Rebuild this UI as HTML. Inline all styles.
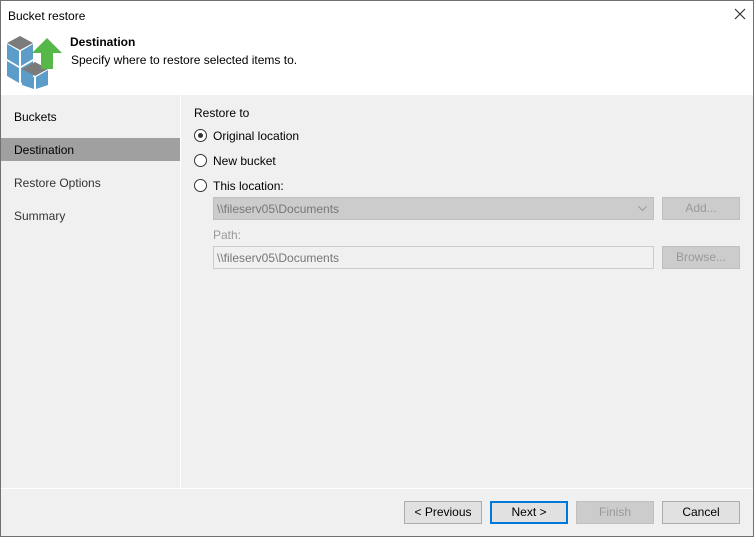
<!DOCTYPE html>
<html><head><style>
*{margin:0;padding:0;box-sizing:border-box}
body{width:754px;height:537px;overflow:hidden;font-family:"Liberation Sans",sans-serif;font-size:12px;color:#000;background:#f0f0f0;position:relative}
.win{position:absolute;left:0;top:0;width:754px;height:537px;border:1px solid #707070;}
.abs{position:absolute}
.btn{position:absolute;height:23px;border:1px solid #adadad;background:#e1e1e1;text-align:center;line-height:21px;font-size:12px}
.radio{position:absolute;width:13px;height:13px;border:1px solid #333;border-radius:50%;background:#fff}
</style></head><body>
<div class="win"></div>
<div class="abs" style="left:1px;top:1px;width:752px;height:94px;background:#fff"></div>
<div class="abs" style="left:8px;top:9px;font-size:12px">Bucket restore</div>
<svg class="abs" style="left:734px;top:8px" width="12" height="12" viewBox="0 0 12 12"><path d="M1 1L11 11M11 1L1 11" stroke="#333" stroke-width="1.2"/></svg>
<svg class="abs" style="left:5px;top:33px" width="58" height="56" viewBox="0 0 58 56">
<polygon points="2,10 15,3 28,10 15,17" fill="#7b7b7b"/>
<polygon points="2,11 14,18 14,33 2,26" fill="#5b9cc9"/>
<polygon points="16,18 28,11 28,26 16,33" fill="#5b9cc9"/>
<polygon points="2,28 14,35 14,50 2,43" fill="#5b9cc9"/>
<polygon points="16,35 28,28 28,43 16,50" fill="#5b9cc9"/>
<polygon points="17,36 30,29 43,36 30,43" fill="#7b7b7b"/>
<polygon points="17,37 29,44 29,56 17,52" fill="#5b9cc9"/>
<polygon points="31,44 43,37 43,52 31,56" fill="#5b9cc9"/>
<polygon points="27,20 42,5 57,20 48,20 48,36 36,36 36,20" fill="#57b84a"/>
</svg>
<div class="abs" style="left:70px;top:35px;font-weight:bold;font-size:12px">Destination</div>
<div class="abs" style="left:71px;top:53px">Specify where to restore selected items to.</div>
<div class="abs" style="left:180px;top:95px;width:1px;height:394px;background:#fff"></div>
<div class="abs" style="left:14px;top:110px">Buckets</div>
<div class="abs" style="left:1px;top:138px;width:179px;height:23px;background:#a0a0a0"></div>
<div class="abs" style="left:14px;top:143px">Destination</div>
<div class="abs" style="left:14px;top:176px;color:#333">Restore Options</div>
<div class="abs" style="left:14px;top:209px;color:#333">Summary</div>
<div class="abs" style="left:194px;top:106px">Restore to</div>
<div class="radio" style="left:194px;top:129px"><div style="position:absolute;left:3px;top:3px;width:5px;height:5px;border-radius:50%;background:#333"></div></div>
<div class="abs" style="left:213px;top:129px">Original location</div>
<div class="radio" style="left:194px;top:154px"></div>
<div class="abs" style="left:213px;top:154px">New bucket</div>
<div class="radio" style="left:194px;top:179px"></div>
<div class="abs" style="left:213px;top:179px">This location:</div>
<div class="abs" style="left:213px;top:197px;width:441px;height:23px;background:#cccccc;border:1px solid #bfbfbf;color:#777;padding:4px 3px">\\fileserv05\Documents<svg style="position:absolute;right:6px;top:8px" width="9" height="5" viewBox="0 0 9 5"><path d="M0.5 0.5L4.5 4.5L8.5 0.5" stroke="#999" fill="none"/></svg></div>
<div class="btn" style="left:662px;top:197px;width:78px;background:#ccc;border-color:#bfbfbf;color:#999">Add...</div>
<div class="abs" style="left:213px;top:228px;color:#999">Path:</div>
<div class="abs" style="left:213px;top:246px;width:441px;height:23px;background:#f0f0f0;border:1px solid #ccc;color:#777;padding:4px 3px">\\fileserv05\Documents</div>
<div class="btn" style="left:662px;top:246px;width:78px;background:#ccc;border-color:#bfbfbf;color:#999">Browse...</div>
<div class="abs" style="left:1px;top:488px;width:752px;height:1px;background:#fff"></div>
<div class="btn" style="left:404px;top:501px;width:78px">&lt; Previous</div>
<div class="btn" style="left:490px;top:501px;width:78px;border:2px solid #0078d7;line-height:19px">Next &gt;</div>
<div class="btn" style="left:576px;top:501px;width:78px;background:#ccc;border-color:#bfbfbf;color:#999">Finish</div>
<div class="btn" style="left:662px;top:501px;width:78px">Cancel</div>
</body></html>
